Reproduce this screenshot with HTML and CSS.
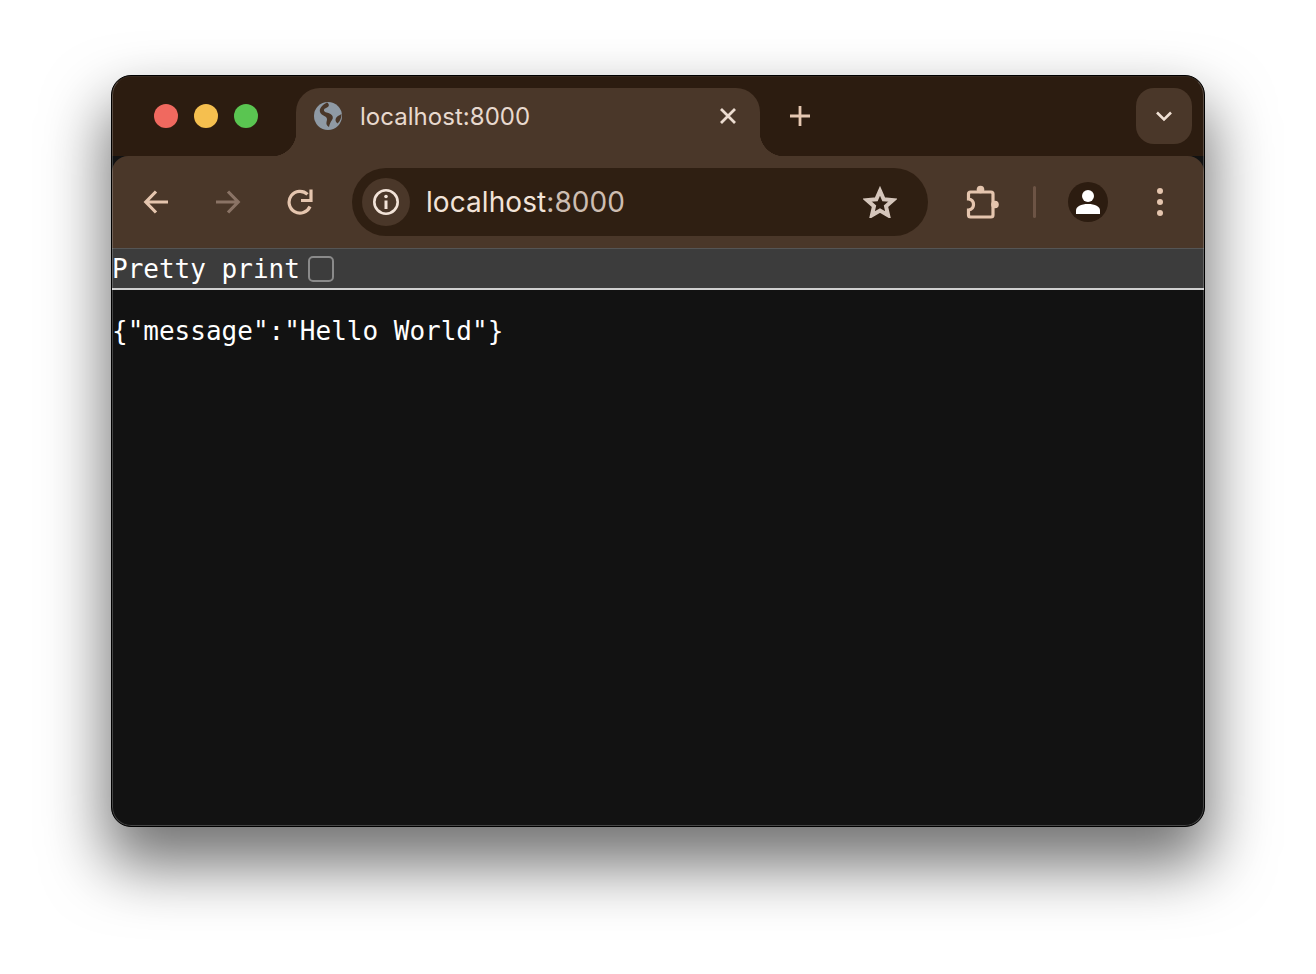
FILE: index.html
```html
<!DOCTYPE html>
<html lang="en">
<head>
<meta charset="utf-8">
<title>localhost:8000</title>
<link rel="stylesheet" href="styles.css">
</head>
<body>
<div class="window">
  <div class="tabstrip">
    <div class="lights">
      <span class="light red"></span>
      <span class="light yellow"></span>
      <span class="light green"></span>
    </div>
    <div class="tab">
      <svg class="globe" viewBox="0 0 28 28">
        <circle cx="14" cy="14" r="14" fill="#8f9aa5"/>
        <path d="M13 .5C15.500 2 15.500 4.500 13 5.500 11 6.300 9.500 7.200 10 8.800 10.600 10.600 14 10.500 16.500 12 19 13.500 19.500 16 18 18 16.500 20 15.500 22 15 25 13 24 12 22 12.500 20 13 18 13.500 16.500 12 15 10 13.500 7 13 6 10 5 7 8 3 13 .5Z" fill="#4a3729"/>
        <path d="M27.500 12C25.500 13.500 23 14 22 16 21 18 21.500 20 23.500 21.500 26 19.500 27.500 16 27.500 12Z" fill="#4a3729"/>
      </svg>
      <span class="tab-title">localhost:8000</span>
      <svg class="tab-close" viewBox="0 0 20 20"><path d="M3 3l14 14M17 3L3 17" stroke="#ecdcd0" stroke-width="2.800" fill="none"/></svg>
    </div>
    <svg class="new-tab" viewBox="0 0 24 24"><path d="M12 2v20M2 12h20" stroke="#e5c7b1" stroke-width="2.800" fill="none"/></svg>
    <div class="tab-search">
      <svg class="chevron" viewBox="0 0 18 12"><path d="M2 2.500l7 7 7-7" stroke="#f0e0d4" stroke-width="2.600" fill="none"/></svg>
    </div>
  </div>
  <div class="toolbar">
    <svg class="nav back" viewBox="0 0 26 26"><path d="M25 13H3.500M13 2.500L2.800 13 13 23.500" stroke="#e5c5ae" stroke-width="3.200" fill="none"/></svg>
    <svg class="nav forward" viewBox="0 0 26 26"><path d="M1 13h21.500M13 2.500L23.200 13 13 23.500" stroke="#8a7365" stroke-width="3.200" fill="none"/></svg>
    <svg class="nav reload" viewBox="0 0 26 26"><path d="M23 17.500A10.900 10.900 0 1 1 20.500 5.300" stroke="#e5c5ae" stroke-width="3.200" fill="none"/><path d="M24 .5V11.500H14" stroke="#e5c5ae" stroke-width="3.200" fill="none"/></svg>
    <div class="omnibox">
      <div class="site-info">
        <svg class="info" viewBox="0 0 28 28"><circle cx="14" cy="14" r="11.700" stroke="#f2e3d8" stroke-width="2.600" fill="none"/><circle cx="14" cy="8.500" r="1.800" fill="#f2e3d8"/><path d="M14 12.500v8.500" stroke="#f2e3d8" stroke-width="3"/></svg>
      </div>
      <span class="url"><span class="host">localhost</span><span class="port">:8000</span></span>
      <svg class="star" viewBox="0 0 34 32"><path d="M17 4.800l3.700 8.500 9.300.8-7 6.100 2.100 9.100L17 24.500l-8.100 4.800 2.100-9.100-7-6.100 9.300-.8Z" stroke="#d5c6bb" stroke-width="4" fill="none"/></svg>
    </div>
    <svg class="puzzle" viewBox="0 0 34 36">
      <path d="M5.500 8H26Q28 8 28 10V31Q28 33 26 33H5.500Q3.500 33 3.500 31V26C7 25.500 8.500 23 8.500 20.500 8.500 18 7 15.500 3.500 15V10Q3.500 8 5.500 8Z" stroke="#e5c5ae" stroke-width="3.200" fill="none"/>
      <circle cx="15.500" cy="5.500" r="3.800" fill="#e5c5ae"/>
      <circle cx="30" cy="20.500" r="3.800" fill="#e5c5ae"/>
    </svg>
    <span class="divider"></span>
    <div class="avatar">
      <svg class="person" viewBox="0 0 24 24"><circle cx="12" cy="6" r="6" fill="#fff"/><path d="M0 24v-3.500c0-4 5-6.500 12-6.500s12 2.500 12 6.500V24Z" fill="#fff"/></svg>
    </div>
    <svg class="menu" viewBox="0 0 6 28"><circle cx="3" cy="3" r="3" fill="#e5c5ae"/><circle cx="3" cy="14" r="3" fill="#e5c5ae"/><circle cx="3" cy="25" r="3" fill="#e5c5ae"/></svg>
  </div>
  <div class="infobar">
    <label class="pretty">Pretty print<span class="check"></span></label>
  </div>
  <pre class="json">{"message":"Hello World"}</pre>
</div>
</body>
</html>
```
FILE: styles.css
```css
* { box-sizing: border-box; }
html, body { margin: 0; height: 100%; background: #fff; overflow: hidden; }
body { padding: 75px 111px 0; }

.window {
  position: relative;
  width: 1094px;
  height: 752px;
  display: flex;
  flex-direction: column;
  background: #121212;
  border-radius: 20px;
  border: 1px solid #000;
  overflow: hidden;
  box-shadow: 0 34px 62px 5px rgba(0, 0, 0, .55);
}
.window::after {
  content: "";
  position: absolute;
  inset: 0;
  border: 1px solid rgba(255, 255, 255, .22);
  border-top-color: rgba(255, 255, 255, .05);
  border-radius: 19px;
  pointer-events: none;
}

.tabstrip {
  height: 80px;
  flex: none;
  display: flex;
  align-items: flex-start;
  background: #2c1c10;
  padding-top: 12px;
  font-family: Inter, "Liberation Sans", sans-serif;
}

.lights {
  width: 184px;
  padding: 16px 0 0 42px;
  display: flex;
  gap: 16px;
  flex: none;
}
.light { width: 24px; height: 24px; border-radius: 50%; }
.red { background: #f0695f; }
.yellow { background: #f5bf4f; }
.green { background: #5ac551; }

.tab {
  position: relative;
  width: 464px;
  height: 68px;
  flex: none;
  display: flex;
  align-items: center;
  padding: 0 22px 12px 18px;
  background: #4a3729;
  border-radius: 24px 24px 0 0;
}
.tab::before, .tab::after {
  content: "";
  position: absolute;
  bottom: 0;
  width: 24px;
  height: 24px;
}
.tab::before { left: -24px; background: radial-gradient(circle at 0 0, transparent 24px, #4a3729 24.5px); }
.tab::after { right: -24px; background: radial-gradient(circle at 100% 0, transparent 24px, #4a3729 24.5px); }
.globe { width: 28px; height: 28px; flex: none; }
.tab-title {
  margin-left: 18px;
  flex: 1;
  font-size: 24px;
  letter-spacing: .03px;
  color: #e8d9ce;
}
.tab-close { width: 20px; height: 20px; flex: none; }
.new-tab { width: 24px; height: 24px; flex: none; margin: 16px 0 0 28px; }
.tab-search {
  margin-left: auto;
  margin-right: 12px;
  width: 56px;
  height: 56px;
  border-radius: 18px;
  background: #4a3729;
  flex: none;
  display: flex;
  align-items: center;
  justify-content: center;
}
.chevron { width: 18px; height: 12px; }

.toolbar {
  height: 92px;
  flex: none;
  display: flex;
  align-items: center;
  padding-left: 31px;
  background: #4a3729;
  border-radius: 16px 16px 0 0;
  font-family: Inter, "Liberation Sans", sans-serif;
  position: relative;
}
.nav { width: 26px; height: 26px; flex: none; }
.forward { margin-left: 46px; }
.reload { margin-left: 46px; }

.omnibox {
  margin-left: 39px;
  width: 576px;
  height: 68px;
  flex: none;
  border-radius: 34px;
  background: #2f1f12;
  display: flex;
  align-items: center;
  padding: 0 31px 0 10px;
}
.site-info {
  width: 48px;
  height: 48px;
  border-radius: 50%;
  background: #4a3729;
  display: flex;
  align-items: center;
  justify-content: center;
  flex: none;
}
.info { width: 28px; height: 28px; }
.url { margin-left: 16px; flex: 1; font-size: 28px; letter-spacing: .07px; }
.host { color: #f2e3d8; }
.port { color: #cdbdb1; }
.star { width: 34px; height: 32px; flex: none; }
.puzzle { width: 34px; height: 36px; flex: none; margin-left: 37px; }
.divider { width: 3px; height: 32px; border-radius: 2px; background: #6d5445; margin-left: 34px; flex: none; }
.avatar {
  width: 40px;
  height: 40px;
  border-radius: 50%;
  background: #2c1c10;
  margin-left: 32px;
  flex: none;
  display: flex;
  align-items: center;
  justify-content: center;
}
.person { width: 24px; height: 24px; }
.menu { width: 6px; height: 28px; flex: none; margin-left: 49px; }

.infobar {
  height: 42px;
  flex: none;
  background: #3c3c3c;
  border-top: 1px solid #555;
  border-bottom: 2px solid #cfcfcf;
  display: flex;
  align-items: center;
}
.pretty {
  display: flex;
  align-items: center;
  font: 26px "DejaVu Sans Mono", monospace;
  color: #fff;
}
.check {
  width: 26px;
  height: 26px;
  margin-left: 8px;
  border: 2px solid #8a8a8a;
  border-radius: 5px;
}

.json {
  margin: 25px 0 0;
  font: 26px/32px "DejaVu Sans Mono", monospace;
  color: #fff;
}
```
